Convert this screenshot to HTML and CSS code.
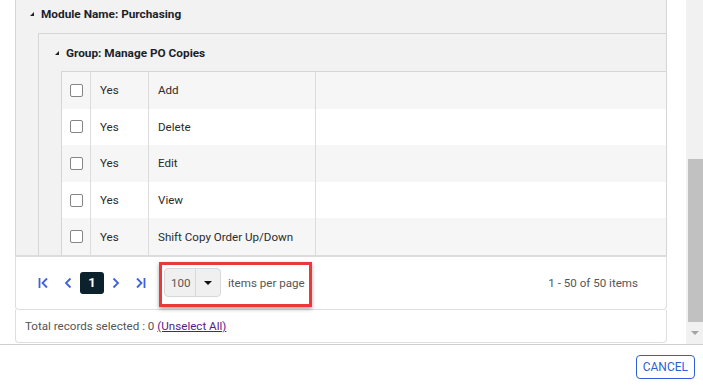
FILE: index.html
```html
<!DOCTYPE html>
<html>
<head>
    <title>Permissions</title>
    <link rel="stylesheet" href="styles.css">
</head>
<body>
    <div class="dialog">
        <div class="dialog-body">
            <div class="scroll-area">
                <!-- Module / group grid -->
                <div class="grid-card">
                    <div class="module-row"><span class="caret"></span>Module Name: Purchasing</div>
                    <div class="group-panel">
                        <div class="group-row"><span class="caret"></span>Group: Manage PO Copies</div>
                        <div class="perm-table">
                            <div class="perm-row alt">
                                <div class="cell cb"><span class="checkbox"></span></div>
                                <div class="cell yes">Yes</div>
                                <div class="cell name">Add</div>
                                <div class="cell rest"></div>
                            </div>
                            <div class="perm-row">
                                <div class="cell cb"><span class="checkbox"></span></div>
                                <div class="cell yes">Yes</div>
                                <div class="cell name">Delete</div>
                                <div class="cell rest"></div>
                            </div>
                            <div class="perm-row alt">
                                <div class="cell cb"><span class="checkbox"></span></div>
                                <div class="cell yes">Yes</div>
                                <div class="cell name">Edit</div>
                                <div class="cell rest"></div>
                            </div>
                            <div class="perm-row">
                                <div class="cell cb"><span class="checkbox"></span></div>
                                <div class="cell yes">Yes</div>
                                <div class="cell name">View</div>
                                <div class="cell rest"></div>
                            </div>
                            <div class="perm-row alt">
                                <div class="cell cb"><span class="checkbox"></span></div>
                                <div class="cell yes">Yes</div>
                                <div class="cell name">Shift Copy Order Up/Down</div>
                                <div class="cell rest"></div>
                            </div>
                        </div>
                    </div>
                </div>

                <!-- Pager -->
                <div class="pager">
                    <span class="pager-btn">
                        <svg width="12" height="12" viewBox="0 0 12 12"><path d="M1.5 1v10M9 1.5L4.5 6 9 10.5" fill="none" stroke="#3f62dc" stroke-width="1.8"/></svg>
                    </span>
                    <span class="pager-btn">
                        <svg width="12" height="12" viewBox="0 0 12 12"><path d="M8.5 1.5L4 6l4.5 4.5" fill="none" stroke="#3f62dc" stroke-width="1.8"/></svg>
                    </span>
                    <span class="pager-page">1</span>
                    <span class="pager-btn">
                        <svg width="12" height="12" viewBox="0 0 12 12"><path d="M3.5 1.5L8 6l-4.5 4.5" fill="none" stroke="#3f62dc" stroke-width="1.8"/></svg>
                    </span>
                    <span class="pager-btn">
                        <svg width="12" height="12" viewBox="0 0 12 12"><path d="M3 1.5L7.5 6 3 10.5M10.5 1v10" fill="none" stroke="#3f62dc" stroke-width="1.8"/></svg>
                    </span>
                    <span class="page-size">
                        <span class="page-size-value">100</span>
                        <span class="page-size-arrow"></span>
                    </span>
                    <span class="page-size-label">items per page</span>
                    <span class="pager-info">1 - 50 of 50 items</span>
                    <span class="highlight"></span>
                </div>

                <div class="summary">Total records selected : 0 <a href="#" class="unselect">(Unselect All)</a></div>
            </div>
            <div class="scrollbar">
                <div class="thumb"></div>
                <span class="arrow-down"></span>
            </div>
        </div>
        <div class="dialog-footer">
            <button class="btn-cancel">CANCEL</button>
        </div>
    </div>
</body>
</html>
```

FILE: styles.css
```css
body { margin: 0; background: #fff; font-family: Roboto, "Liberation Sans", sans-serif; font-size: 11.6px; color: #333; }
.dialog { width: 703px; }
.dialog-body { display: flex; height: 344px; border-bottom: 1px solid #cfcfcf; }
.scroll-area { flex: 1; padding: 0 19px 0 15px; }

.grid-card { background: #f2f2f2; border-left: 1px solid #d6d6d6; border-right: 1px solid #d6d6d6; }
.module-row { height: 33px; display: flex; align-items: flex-start; padding: 5px 0 0 14px; box-sizing: border-box; line-height: 18px; font-weight: 700; font-size: 11.8px; color: #1c1f2a; }
.caret { display: inline-block; width: 0; height: 0; border-left: 4px solid transparent; border-bottom: 4px solid #222; margin: 7px 7px 0 0; }
.group-panel { margin-left: 22px; border-top: 1px solid #d6d6d6; border-left: 1px solid #d6d6d6; }
.group-row { height: 37px; display: flex; align-items: center; padding-left: 16px; font-weight: 700; font-size: 11.8px; color: #1c1f2a; }
.group-row .caret { margin-top: 0; }

.perm-table { margin-left: 22px; border-top: 1px solid #d6d6d6; border-left: 1px solid #d6d6d6; }
.perm-row { display: grid; grid-template-columns: 29px 58px 167px 1fr; height: 36.6px; background: #fff; }
.perm-row.alt { background: #f6f6f6; }
.cell { display: flex; align-items: center; border-right: 1px solid #dcdcdc; padding-left: 9px; color: #2b2b2b; }
.cell.cb { padding-left: 8px; }
.cell.rest { border-right: none; }
.checkbox { width: 11px; height: 11px; border: 1px solid #858585; border-radius: 2px; background: #fff; }

.pager { position: relative; display: flex; align-items: center; height: 52px; padding-left: 16px; background: #fff; border: 1px solid #dedede; border-top: 2px solid #dcdcdc; border-radius: 0 0 4px 4px; color: #555; }
.pager-btn { width: 24px; height: 22px; display: flex; align-items: center; justify-content: center; }
.pager-page { width: 24px; height: 22px; display: flex; align-items: center; justify-content: center; background: #0b222d; color: #fff; border-radius: 3px; font-weight: 700; font-size: 13px; }
.page-size { display: flex; height: 27px; margin-left: 12px; border: 1px solid #d8d8d8; border-radius: 4px; background: #f0f0f0; }
.page-size-value { width: 31px; display: flex; align-items: center; padding-left: 6px; box-sizing: border-box; border-right: 1px solid #d8d8d8; color: #555; }
.page-size-arrow { width: 24px; display: flex; align-items: center; justify-content: center; }
.page-size-arrow::after { content: ""; border-left: 4px solid transparent; border-right: 4px solid transparent; border-top: 4px solid #111; }
.page-size-label { margin-left: 7px; }
.pager-info { margin-left: auto; margin-right: 28px; }
.highlight { position: absolute; left: 143px; top: 5px; width: 147px; height: 39px; border: 3px solid #e8393d; box-shadow: 0 2px 4px rgba(0, 0, 0, 0.35); }

.summary { height: 32px; display: flex; align-items: center; padding-left: 9px; border: 1px solid #dedede; border-top: none; border-radius: 0 0 4px 4px; color: #555; }
.unselect { margin-left: 3px; color: #551a8b; }

.scrollbar { position: relative; width: 17px; background: #f1f1f1; }
.thumb { position: absolute; left: 2px; right: 0; top: 159px; height: 163px; background: #c1c1c1; }
.arrow-down { position: absolute; left: 5px; top: 331px; border-left: 4px solid transparent; border-right: 4px solid transparent; border-top: 4px solid #a3a3a3; }

.dialog-footer { display: flex; justify-content: flex-end; padding: 10px 8px 0 0; }
.btn-cancel { height: 24px; padding: 0 6px; background: #fff; border: 1px solid #2f5fd6; border-radius: 4px; color: #2f5fd6; font-family: Roboto, "Liberation Sans", sans-serif; font-size: 12px; }
```
